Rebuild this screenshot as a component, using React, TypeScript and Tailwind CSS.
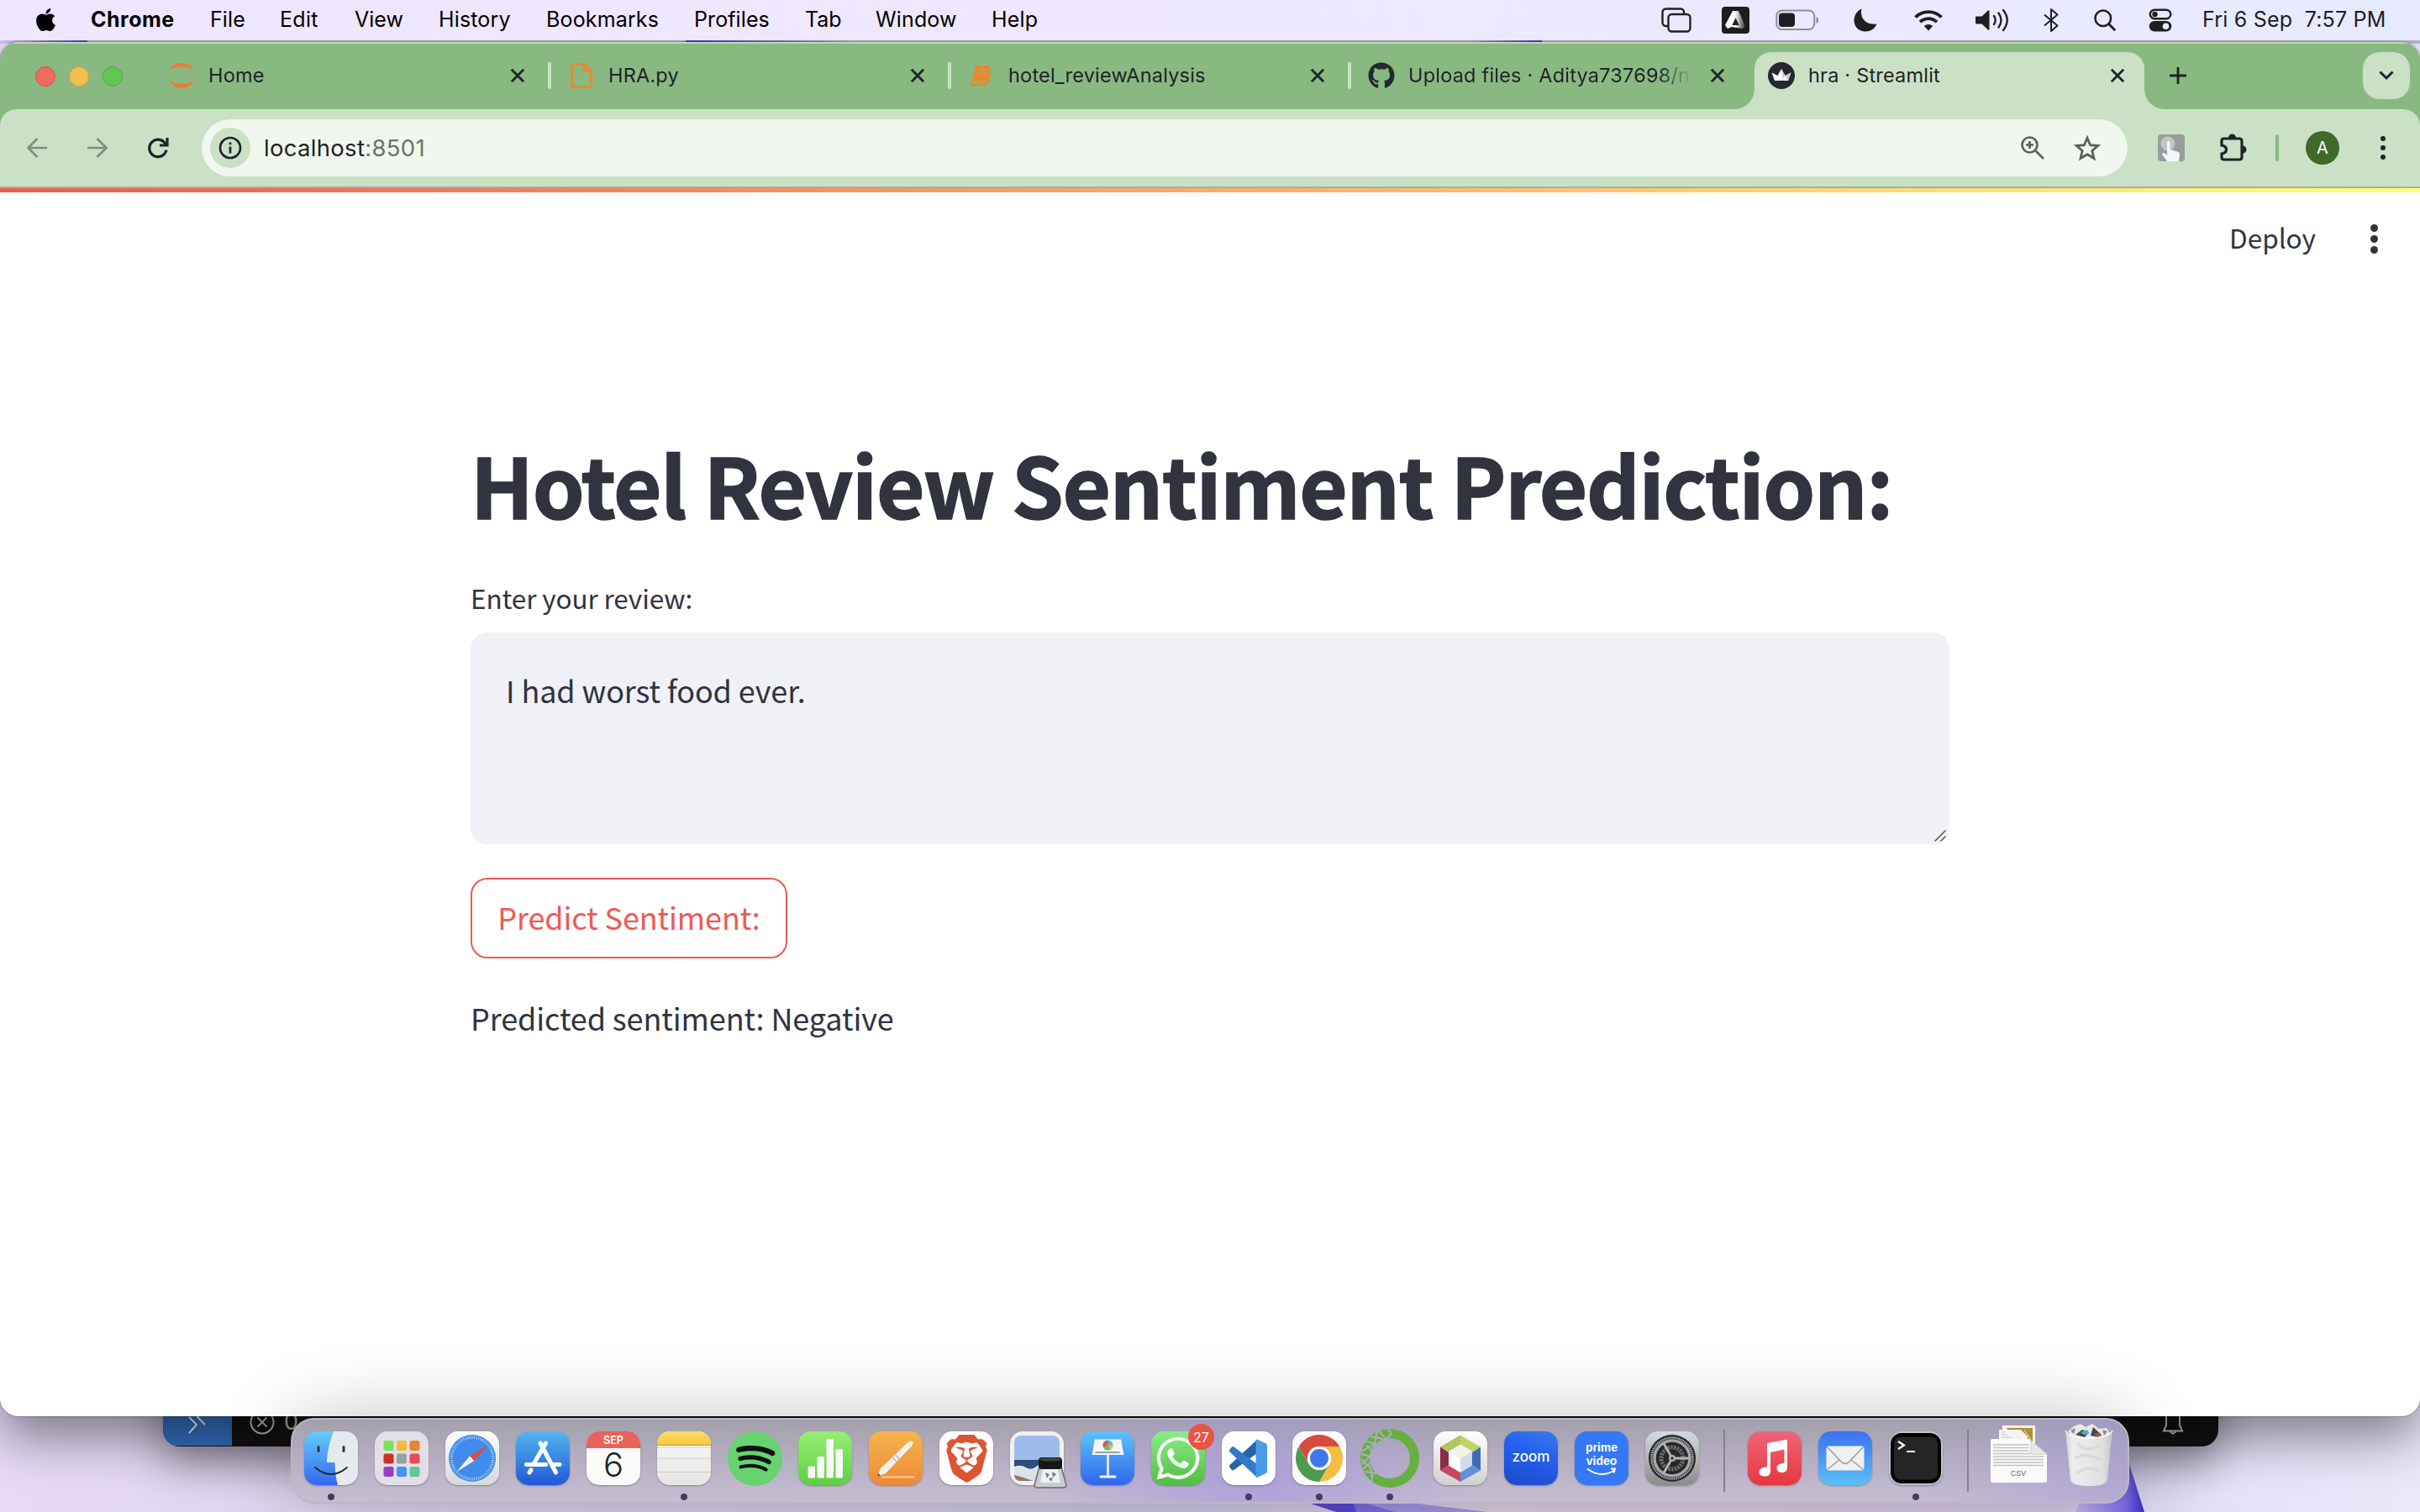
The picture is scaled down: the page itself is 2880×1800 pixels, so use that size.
import React from "react";
import { FaApple, FaGithub, FaSpotify, FaWhatsapp } from "react-icons/fa";
import { SiBrave } from "react-icons/si";

const sans = "font-['Inter','Liberation_Sans',sans-serif]";
const source = "font-['Noto_Sans_CJK_SC','Noto_Sans',sans-serif]";

/* ---------- Menu bar ---------- */

const menus = [
  { label: "Chrome", cls: "w-[142px] font-bold tracking-[0.5px]" },
  { label: "File", cls: "w-[83px] tracking-[0.1px]" },
  { label: "Edit", cls: "w-[89px] tracking-[0.3px]" },
  { label: "View", cls: "w-[100px]" },
  { label: "History", cls: "w-[128px] tracking-[0.15px]" },
  { label: "Bookmarks", cls: "w-[176px] tracking-[0.15px]" },
  { label: "Profiles", cls: "w-[132px] tracking-[0.1px]" },
  { label: "Tab", cls: "w-[84px]" },
  { label: "Window", cls: "w-[138px] tracking-[0.15px]" },
  { label: "Help", cls: "w-[80px] tracking-[0.2px]" },
];

function Cell({ cls, children }: { cls: string; children: React.ReactNode }) {
  return <div className={`flex shrink-0 items-center justify-center ${cls}`}>{children}</div>;
}

function StatusIcons() {
  return (
    <>
      <Cell cls="w-[68px]">
        <svg width="36" height="30" viewBox="0 0 36 30" fill="none" stroke="#222" strokeWidth="2.4">
          <path d="M8 22H5.5a4 4 0 0 1-4-4V5.500a4 4 0 0 1 4-4H23a4 4 0 0 1 4 4V7" />
          <rect x="8.500" y="8" width="26" height="20.500" rx="4" />
        </svg>
      </Cell>
      <Cell cls="w-[72px]">
        <svg width="33" height="32" viewBox="0 0 33 32">
          <defs>
            <linearGradient id="ag" x1="0" x2="1">
              <stop offset=".5" stopColor="#fff" />
              <stop offset="1" stopColor="#333" />
            </linearGradient>
          </defs>
          <rect width="33" height="32" rx="4" fill="#1d1d1f" />
          <path d="M13 5h7l8 18-3 3-13-2-5 2-3-4z" fill="url(#ag)" />
          <path d="M16.500 13l4 9h-8z" fill="#1d1d1f" />
        </svg>
      </Cell>
      <Cell cls="w-[75px]">
        <svg width="52" height="26" viewBox="0 0 52 26">
          <rect x="1.200" y="1.500" width="45" height="22.500" rx="6.500" fill="none" stroke="#8f8d99" strokeWidth="2" />
          <rect x="4" y="4.500" width="19" height="16.500" rx="4" fill="#1f1f21" />
          <path d="M48.500 9v8c1.800-.6 2.600-2 2.600-4s-.8-3.400-2.600-4z" fill="#8f8d99" />
        </svg>
      </Cell>
      <Cell cls="w-[87px]">
        <svg width="28" height="28" viewBox="0 0 28 28">
          <path d="M9.500 0.500C7.500 9 12 20 27.500 18.500C25 24.500 20 27.500 14 27.500C6 27.500 0.500 21.500 0.500 14.500C0.500 8 4 3 9.500 0.500Z" fill="#1f1f21" />
        </svg>
      </Cell>
      <Cell cls="w-[64px]">
        <svg width="34" height="26" viewBox="0 0 34 26" fill="none" stroke="#1f1f21" strokeWidth="3.800">
          <path d="M1.500 9.500a22 22 0 0 1 31 0" />
          <path d="M7 15.200a14.200 14.200 0 0 1 20 0" />
          <path d="M17 25.500l-5.200-5.400a7.400 7.400 0 0 1 10.400 0z" fill="#1f1f21" stroke="none" />
        </svg>
      </Cell>
      <Cell cls="w-[88px]">
        <svg width="40" height="28" viewBox="0 0 40 28" fill="none" stroke="#1f1f21" strokeWidth="2.300" strokeLinecap="round">
          <path d="M1 9.500h6.500L15 2.500q1.500-1 1.500 1v21q0 2-1.500 1L7.500 18.500H1q-1 0-1-1v-7q0-1 1-1z" fill="#1f1f21" stroke="none" />
          <path d="M22 9q3.500 5 0 10M27.500 5.500q6 8.500 0 17M33 2q9.500 12 0 24" />
        </svg>
      </Cell>
      <Cell cls="w-[52px]">
        <svg width="20" height="28" viewBox="0 0 20 28" fill="none" stroke="#1f1f21" strokeWidth="2" strokeLinejoin="round">
          <path d="M2 7.500l15.500 13L10 27V1l7.500 6.500L2 20.500" />
        </svg>
      </Cell>
      <Cell cls="w-[76px]">
        <svg width="26" height="26" viewBox="0 0 26 26" fill="none" stroke="#1f1f21" strokeWidth="2.500" strokeLinecap="round">
          <circle cx="10.800" cy="10.800" r="9.300" />
          <path d="M17.800 17.800l6.500 6.500" strokeWidth="3" />
        </svg>
      </Cell>
      <Cell cls="w-[56px]">
        <svg width="28" height="28" viewBox="0 0 28 28">
          <rect x="1.800" y="1.800" width="24.400" height="10.400" rx="5.200" fill="none" stroke="#1f1f21" strokeWidth="2.400" />
          <circle cx="7.500" cy="7" r="3.200" fill="#1f1f21" />
          <rect x="0.800" y="15" width="26.400" height="12.500" rx="6.200" fill="#1f1f21" />
          <circle cx="20.500" cy="21.200" r="3.800" fill="#ebe9fd" />
        </svg>
      </Cell>
    </>
  );
}

function MenuBar() {
  return (
    <div className={`absolute inset-x-0 top-0 flex h-12 items-center bg-[linear-gradient(90deg,#efe6ff_0%,#eee8fe_50%,#e7eaff_100%)] text-[25px] text-black ${sans}`}>
      <div className="flex w-[108px] justify-center">
        <FaApple className="size-[31px] -translate-y-px" />
      </div>
      {menus.map((m) => (
        <span key={m.label} className={`shrink-0 -translate-y-px leading-[48px] whitespace-nowrap ${m.cls}`}>
          {m.label}
        </span>
      ))}
      <div className="ml-auto flex items-center">
        <StatusIcons />
        <span className="ml-[22px] w-[259px] -translate-y-px leading-[48px] tracking-[0.2px] whitespace-pre text-[#1d1d1f]">
          Fri 6 Sep&nbsp; 7:57 PM
        </span>
      </div>
    </div>
  );
}

/* ---------- Browser tabs ---------- */

function Close() {
  return (
    <svg width="18" height="18" viewBox="0 0 18 18" stroke="#1f2328" strokeWidth="2.800">
      <path d="M1.800 1.800l14.400 14.400M16.200 1.800L1.800 16.200" />
    </svg>
  );
}

const jupyter = (
  <svg width="32" height="32" viewBox="0 0 32 32" fill="#ee7c34">
    <path d="M1 10C4 4 9 1 16 1s12 3 15 9C27 7 22 5.500 16 5.500S5 7 1 10z" />
    <path d="M1 21c3 6.500 8 10 15 10s12-3.500 15-10c-4 3.500-9 5-15 5S5 24.500 1 21z" />
  </svg>
);
const fileIcon = (
  <svg width="26" height="30" viewBox="0 0 26 30" fill="none" stroke="#f28427" strokeWidth="2.600">
    <path d="M1.500 1.500h15l8 8v19h-23z" />
    <path d="M16.500 1.500v8h8" />
  </svg>
);
const bookIcon = (
  <svg width="28" height="26" viewBox="0 0 28 26">
    <path d="M9 1H21.500Q24 1 23.500 3L19 17.500Q18.300 19.500 16 19.500H3L7 3Q7.500 1 9 1Z" fill="#f28427" />
    <path d="M3 19.500Q0.500 24 3.500 24.500H18Q20.300 24.500 21 22L26 7" fill="none" stroke="#f28427" strokeWidth="2" />
    <path d="M4 22H17.500Q19 22 19.500 20L24.500 5" fill="none" stroke="#f28427" strokeWidth="1.200" />
    <path d="M10.500 6h9.500M9.300 10.300h9.500" stroke="#88b981" strokeWidth="1.800" />
  </svg>
);
const streamlitIcon = (
  <svg width="32" height="32" viewBox="0 0 32 32">
    <circle cx="16" cy="16" r="16" fill="#262730" />
    <path d="M4.500 12.500l7 3.500L16 8l4.500 8 7-3.500L24 22H8z" fill="#fff" />
    <path d="M16 8l4.500 8L24 22H18zM27.500 12.500L20.500 16l-5 6H24z" fill="#c9c9c9" />
  </svg>
);

const tabs = [
  { title: "Home", icon: jupyter, cls: "" },
  { title: "HRA.py", icon: fileIcon, cls: "" },
  { title: "hotel_reviewAnalysis", icon: bookIcon, cls: "" },
  {
    title: "Upload files · Aditya737698/n",
    icon: <FaGithub className="size-8 text-[#24292f]" />,
    cls: "bg-[linear-gradient(90deg,#1f2328_88%,#88b981_100%)] bg-clip-text text-transparent",
  },
];

function TabStrip() {
  return (
    <div className={`flex h-20 bg-[linear-gradient(#bfd8bb_0,#bfd8bb_2px,#88b981_2px)] text-[23.5px] text-[#1f2328] ${sans}`}>
      <div className="flex w-[178px] items-center gap-4 pl-[42px] pt-0.5">
        <div className="size-6 rounded-full border border-[#d5544b] bg-[#ee6b60]" />
        <div className="size-6 rounded-full border border-[#d8a03b] bg-[#f5bf50]" />
        <div className="size-6 rounded-full border border-[#4fa840] bg-[#62c655]" />
      </div>
      {tabs.map((t, i) => (
        <div key={t.title} className="flex w-[476px] shrink-0 items-center pl-[22px] pr-[29px]">
          <div className="flex w-8 justify-center">{t.icon}</div>
          <span className={`ml-4 w-[338px] overflow-hidden leading-10 tracking-[0.2px] whitespace-nowrap ${t.cls}`}>{t.title}</span>
          <div className="ml-auto">
            <Close />
          </div>
          <div className={`-mr-[31px] ml-[27px] h-8 w-1 rounded-full ${i < 3 ? "bg-[#cae1c6]" : "bg-transparent"}`} />
        </div>
      ))}
      <div className="relative ml-1.5 mt-3 flex h-[68px] w-[464px] shrink-0 items-center rounded-t-[20px] bg-[#cae1c6] pl-4 pr-[23px]">
        <svg className="absolute bottom-0 -left-6" width="24" height="24" viewBox="0 0 24 24">
          <path d="M24 0v24H0A24 24 0 0 0 24 0z" fill="#cae1c6" />
        </svg>
        <svg className="absolute -right-6 bottom-0" width="24" height="24" viewBox="0 0 24 24">
          <path d="M0 0v24h24A24 24 0 0 1 0 0z" fill="#cae1c6" />
        </svg>
        <div className="flex w-full -translate-y-1.5 items-center">
          {streamlitIcon}
          <span className="ml-4 leading-10 tracking-[0.2px]">hra · Streamlit</span>
          <div className="ml-auto">
            <Close />
          </div>
        </div>
      </div>
      <div className="flex w-20 items-center justify-center">
        <svg width="22" height="22" viewBox="0 0 22 22" stroke="#1f2328" strokeWidth="2.800">
          <path d="M11 1v20M1 11h20" />
        </svg>
      </div>
      <div className="mt-3 mr-3 ml-auto flex h-14 w-14 items-center justify-center rounded-[20px] bg-[#cae1c6]">
        <svg width="18" height="12" viewBox="0 0 18 12" fill="none" stroke="#1f2328" strokeWidth="3">
          <path d="M1.500 1.500L9 9l7.500-7.500" />
        </svg>
      </div>
    </div>
  );
}

function Toolbar() {
  return (
    <div className="bg-[#88b981]">
      <div className="flex h-[92px] items-center rounded-t-[20px] bg-[#cae1c6] pl-2">
        <Cell cls="w-[72px]">
          <svg width="26" height="26" viewBox="0 0 26 26" fill="none" stroke="#7f8e7d" strokeWidth="2.700">
            <path d="M25 13H3M13.500 2L2.500 13l11 11" />
          </svg>
        </Cell>
        <Cell cls="w-[72px]">
          <svg width="26" height="26" viewBox="0 0 26 26" fill="none" stroke="#7f8e7d" strokeWidth="2.700">
            <path d="M1 13h22M12.500 2l11 11-11 11" />
          </svg>
        </Cell>
        <Cell cls="w-[72px]">
          <svg width="26" height="26" viewBox="0 0 26 26" fill="none" stroke="#1f2328" strokeWidth="3.200">
            <path d="M22.300 9.200A10.200 10.200 0 1 0 23 15.500" />
            <path d="M24 1v9h-9" />
          </svg>
        </Cell>
        <div className="ml-4 flex h-[68px] w-[2292px] items-center rounded-full bg-[#f0f7ef] pl-2.5 pr-8">
          <div className="flex size-12 items-center justify-center rounded-full bg-[#cae1c6]">
            <svg width="28" height="28" viewBox="0 0 28 28" fill="none" stroke="#1f2328" strokeWidth="2.700">
              <circle cx="14" cy="14" r="12" />
              <path d="M14 12.500v8M14 7.500v2.800" />
            </svg>
          </div>
          <span className={`ml-4 text-[27.5px] leading-[68px] tracking-[0.3px] text-[#1f2328] ${sans}`}>
            localhost<span className="text-[#6a736a]">:8501</span>
          </span>
          <svg className="ml-auto" width="30" height="30" viewBox="0 0 30 30" fill="none" stroke="#5a615a" strokeWidth="2.700">
            <circle cx="11.500" cy="11.500" r="9" />
            <path d="M18 18l10 10M11.500 7v9M7 11.500h9" />
          </svg>
          <svg className="ml-[34px]" width="32" height="32" viewBox="0 0 32 32" fill="none" stroke="#5a615a" strokeWidth="2.800">
            <path d="M16 4.200l3.600 8.500 9.200.8-7 6 2.200 9-8-4.800-8 4.800 2.200-9-7-6 9.200-.8z" />
          </svg>
        </div>
        <Cell cls="ml-4 w-[72px]">
          <svg width="32" height="32" viewBox="0 0 32 32">
            <rect width="32" height="32" rx="4" fill="#9a9c9a" />
            <circle cx="12" cy="11" r="8.500" fill="#c4c6c4" />
            <path d="M12 8q2-1 2.500 1v9l9 2.500q3 1 2.500 4L25 32H11l-6-8q0-2.500 3-1.500l3 2V9z" fill="#f1f6fd" />
          </svg>
        </Cell>
        <Cell cls="w-[72px] pl-1">
          <svg width="34" height="34" viewBox="0 0 34 34">
            <path d="M5.500 6q-2.500 0-2.500 2.500v5.500q5.500.8 5.500 5t-5.500 5v4.500q0 2.500 2.500 2.500h18.500q3 0 3-3V9q0-3-3-3z" fill="none" stroke="#1f2328" strokeWidth="3.200" />
            <path d="M11 5a4.500 4.500 0 0 1 9 0zM28 14.500a4.500 4.500 0 0 1 0 9z" fill="#1f2328" />
          </svg>
        </Cell>
        <Cell cls="w-9">
          <div className="h-8 w-1 rounded-full bg-[#88b981]" />
        </Cell>
        <Cell cls="w-[72px]">
          <div className={`flex size-10 items-center justify-center rounded-full bg-[#40692a] text-[20px] text-white ${sans}`}>A</div>
        </Cell>
        <Cell cls="w-[72px]">
          <div className="flex flex-col gap-[5px]">
            <div className="size-1.5 rounded-full bg-[#1f2328]" />
            <div className="size-1.5 rounded-full bg-[#1f2328]" />
            <div className="size-1.5 rounded-full bg-[#1f2328]" />
          </div>
        </Cell>
      </div>
    </div>
  );
}

/* ---------- Streamlit page ---------- */

function StreamlitPage() {
  return (
    <div className={`flex flex-1 flex-col bg-white text-[#31333f] ${source}`}>
      <div className="h-0.5 bg-[#9fb39c]" />
      <div className="h-[5px] bg-[linear-gradient(90deg,#f05b54,#fffd80)]" />
      <header className="flex items-center justify-end pt-[27px] pr-[50px]">
        <span className="-translate-y-0.5 text-[31.5px] leading-[56px]">Deploy</span>
        <div className="ml-[65px] flex flex-col gap-1">
          <div className="size-[9px] rounded-full bg-[#31333f]" />
          <div className="size-[9px] rounded-full bg-[#31333f]" />
          <div className="size-[9px] rounded-full bg-[#31333f]" />
        </div>
      </header>
      <main className="mx-auto flex w-[1760px] flex-col items-start pt-[197px]">
        <h1 className="text-[99px] leading-[132px] font-bold tracking-[-1.28px] whitespace-nowrap [-webkit-text-stroke:1.6px_#31333f]">
          Hotel Review Sentiment Prediction:
        </h1>
        <label className="mt-[42px] text-[31.5px] leading-[56px] tracking-[-0.1px]">Enter your review:</label>
        <div className="relative mt-3.5 h-[252px] w-full rounded-[20px] bg-[#f0f1f6] px-[42px] pt-10 text-[36px] leading-[56px] tracking-[-0.1px]">
          I had worst food ever.
          <svg className="absolute right-1 bottom-[3px]" width="14" height="14" viewBox="0 0 14 14" stroke="#4a4a4a" strokeWidth="1.400">
            <path d="M.5 13.500l13-13M7.500 13.500l6-6" />
          </svg>
        </div>
        <button className="mt-10 flex h-24 w-[377px] items-center justify-center rounded-[20px] border-[2px] border-[#ee5a54] pb-[5px] text-[36px] leading-[56px] tracking-[-0.1px] text-[#ee5a54]">
          Predict Sentiment:
        </button>
        <p className="mt-[38px] text-[36px] leading-[64px] tracking-[-0.1px]">Predicted sentiment: Negative</p>
      </main>
    </div>
  );
}

/* ---------- Dock ---------- */

const ticks = Array.from({ length: 60 }, (_, i) => i * 6);
const padColors = ["#7ae25a", "#f7b93a", "#e8862f", "#cf3026", "#9a9fa2", "#ea4a5c", "#9440c4", "#3f94f5", "#5fc79a"];

function Tile({ cls, children }: { cls: string; children?: React.ReactNode }) {
  return <div className={`relative flex size-16 items-center justify-center overflow-hidden rounded-[15px] shadow-[0_1px_2px_rgba(0,0,0,0.3)] ${cls}`}>{children}</div>;
}

function Art({ children }: { children: React.ReactNode }) {
  return (
    <svg className="shrink-0 overflow-visible" width="64" height="64" viewBox="0 0 64 64" fill="none">
      {children}
    </svg>
  );
}

const finder = (
  <Tile cls="bg-[linear-gradient(#63cdf9,#3567f0)]">
    <Art>
      <path d="M35 0C30 12 27 28 27 37h9.500c0 11 1.500 20 3.500 27h24V0z" fill="#e6e9ee" />
      <path d="M17 18.500v5M47 18.500v5" stroke="#333" strokeWidth="3" strokeLinecap="round" />
      <path d="M13 43q19 16 38 0" stroke="#222" strokeWidth="1.800" strokeLinecap="round" />
    </Art>
  </Tile>
);
const launchpad = (
  <Tile cls="bg-[#e2dfe8]">
    <Art>
      {padColors.map((c, i) => (
        <rect key={c} x={10.500 + (i % 3) * 15.500} y={11 + Math.floor(i / 3) * 15.500} width="12" height="12" rx="2.500" fill={c} />
      ))}
    </Art>
  </Tile>
);
const safari = (
  <Tile cls="bg-[linear-gradient(#fff,#d8d8d8)]">
    <Art>
      <circle cx="32" cy="32" r="28" fill="#3f8cec" />
      {ticks.map((a) => (
        <path key={a} d="M32 5.500v3.500" stroke="#cfe2fb" strokeWidth=".8" transform={`rotate(${a} 32 32)`} />
      ))}
      <path d="M51 16L29 29.500l5.500 5.500z" fill="#e2483c" />
      <path d="M13 48.500L29 29.500l5.500 5.500z" fill="#f4f4f4" />
    </Art>
  </Tile>
);
const appStore = (
  <Tile cls="bg-[linear-gradient(#52b5f0,#2358d6)]">
    <Art>
      <g stroke="#fff" strokeWidth="5" strokeLinecap="round">
        <path d="M29 14l18.500 35M35.500 14L21.500 38M12.500 39.500h23M44 39.500h8M18 46l-2 3" />
      </g>
    </Art>
  </Tile>
);
const calendar = (
  <Tile cls="flex-col justify-start bg-[#fafaf8]">
    <div className={`h-5 w-full bg-[#e6645a] text-center text-[12.5px] leading-[21px] font-semibold text-white ${sans}`}>SEP</div>
    <div className={`text-[40px] leading-[40px] font-light text-[#222] ${sans}`}>6</div>
  </Tile>
);
const notes = (
  <Tile cls="flex-col justify-start bg-[linear-gradient(#fafafa,#e6e5e1)]">
    <div className="h-4 w-full bg-[linear-gradient(#fbdb6a,#f7c83c)]" />
    <div className="h-px w-full bg-[#a99a6b]" />
    <div className="mt-0.5 w-full border-t border-dotted border-[#b5b5b0]" />
    <div className="mt-3 h-px w-full bg-[#d6d6d4]" />
    <div className="mt-[15px] h-px w-full bg-[#c9c9c5]" />
  </Tile>
);
const spotify = (
  <div className="relative flex size-[67px] items-center justify-center">
    <div className="absolute inset-2 rounded-full bg-[#111]" />
    <FaSpotify className="relative size-[67px] text-[#66d36e]" />
  </div>
);
const numbers = (
  <Tile cls="bg-[linear-gradient(#97ee74,#5fcf44)]">
    <Art>
      <g fill="#f7f8f7">
        <rect x="11.500" y="41.500" width="8.500" height="14" rx="1.500" />
        <rect x="22.500" y="30" width="8.500" height="25.500" rx="1.500" />
        <rect x="33.500" y="9" width="8.500" height="46.500" rx="1.500" />
        <rect x="44.500" y="21" width="8.500" height="34.500" rx="1.500" />
      </g>
    </Art>
  </Tile>
);
const pages = (
  <Tile cls="bg-[linear-gradient(#f5b44c,#ee8a36)]">
    <Art>
      <path d="M16 54.500h38" stroke="#f8cf9d" strokeWidth="2.200" strokeLinecap="round" />
      <path d="M10 54l4-10L46 13.500q4-3 6-1.500 1.500 2-1.500 6L20 50z" fill="#f3f1ef" />
      <path d="M28 31l6 6M31.500 28l5.500 6" stroke="#bdb4aa" strokeWidth="1.200" />
      <path d="M10 54l1.500-4 2.500 2.500z" fill="#555" />
    </Art>
  </Tile>
);
const brave = (
  <Tile cls="bg-white">
    <SiBrave className="size-[57px] text-[#dd5434]" />
  </Tile>
);
const preview = (
  <div className="relative">
    <Tile cls="bg-[#f0f0f0]">
      <Art>
        <rect x="5" y="5" width="54" height="54" rx="8" fill="#9dbcec" />
        <path d="M5 34h54v17q0 8-8 8H13q-8 0-8-8z" fill="#2f4d80" />
        <path d="M5 42q8-3 14 1t12-1 12 3v14H13q-8 0-8-8z" fill="#dbe3ea" />
        <path d="M5 52q10 2 22 7H13q-7 0-8-7z" fill="#8f7a66" />
      </Art>
    </Tile>
    <svg className="absolute -right-1 -bottom-1" width="40" height="38" viewBox="0 0 40 38">
      <path d="M7 12h26l6 22q0 3-4 3H5q-4 0-4-3z" fill="#c9ccd0" stroke="#66696d" strokeWidth="1.500" />
      <path d="M11 15h18l3 16H8z" fill="#eef0f4" />
      <path d="M14 19l5 2-3 5zM22 18l5 3-4 4zM18 26l5-1-2 5z" fill="#6f7d96" />
      <rect x="6" y="1" width="28" height="14" rx="4" fill="#161616" />
      <ellipse cx="20" cy="3.500" rx="13" ry="2" fill="#444" />
    </svg>
  </div>
);
const keynote = (
  <Tile cls="bg-[linear-gradient(#5cc3f9,#2f66ea)]">
    <Art>
      <path d="M17 9.500h31l3.500 18.500h-38z" fill="#f5f6f8" />
      <path d="M17.500 25h29" stroke="#8fa3bb" strokeWidth="1.800" />
      <circle cx="32.500" cy="16.500" r="6" fill="#58b6e8" />
      <path d="M32.500 16.500v-6a6 6 0 0 0-5.600 8z" fill="#e5534a" />
      <path d="M32.500 16.500l-5.600 2a6 6 0 0 0 8.600 3.200z" fill="#6abf59" />
      <path d="M32.500 16.500l3 5.200a6 6 0 0 0 3-5.200z" fill="#f3b944" />
      <path d="M32.500 28v25" stroke="#dfe6f2" strokeWidth="3" />
      <rect x="22.500" y="52.500" width="20" height="3" rx="1.500" fill="#eef2f9" />
    </Art>
  </Tile>
);
const whatsapp = (
  <div className="relative">
    <Tile cls="bg-[linear-gradient(#86ee84,#53bd43)]">
      <FaWhatsapp className="size-[58px] text-[#f6f8f6]" />
    </Tile>
    <div className={`absolute -top-[9px] -right-[11px] flex size-[31px] items-center justify-center rounded-full bg-[#e95445] text-[16px] text-white ${sans}`}>27</div>
  </div>
);
const vscode = (
  <Tile cls="bg-white">
    <Art>
      <path d="M9.500 40L42 10v16L14.500 46q-1.500 1-3-.5L9.500 43q-1-1.500 0-3z" fill="#2763a8" />
      <path d="M9.500 24.500q-1-1.500 0-3l2-2.500q1.500-1.500 3-.5L42 39v16z" fill="#3279c6" />
      <path d="M42 9.500L52.500 14.500q1.500.8 1.500 2.500v30.500q0 1.700-1.500 2.500L42 55q-1 .3-1.500-1V10.500q.5-1.300 1.500-1z" fill="#4a9ae8" />
    </Art>
  </Tile>
);
const chrome = (
  <Tile cls="bg-[#fbfbfc]">
    <svg width="56" height="56" viewBox="0 0 48 48">
      <path d="M24 12H44.780A23.994 23.994 0 0 0 3.215 12.003L13.608 30.003A11.985 11.985 0 0 1 24 12z" fill="#d94a3c" />
      <path d="M34.391 30.003L24 48A23.994 23.994 0 0 0 44.780 12H24A11.985 11.985 0 0 1 34.391 30.003z" fill="#f4be42" />
      <path d="M13.609 30.003L3.218 12.006A23.994 23.994 0 0 0 24 48L34.394 30.003A11.985 11.985 0 0 1 13.609 30.003z" fill="#4c9c50" />
      <circle cx="24" cy="24" r="12" fill="#fff" />
      <circle cx="24" cy="24" r="9.400" fill="#3f78e6" />
    </svg>
  </Tile>
);
const anaconda = (
  <svg className="shrink-0" width="70" height="70" viewBox="0 0 70 70" fill="none">
    <circle cx="35" cy="35" r="29.500" stroke="#66b03f" strokeWidth="11" />
    <g stroke="#b3aacb" strokeWidth="1.900">
      <path d="M33 0l4 6-8 7M22 2l8 10M12 9l15 3M20 3l-3 15M7 15l11 3M7 19l8 10M1 27l16-9M1 30l14 4M2 42l12-12M3 48l10-9M1 36l12 12M5 51l14 2M10 43l5 14M13 49l1 13" />
    </g>
  </svg>
);
const netbeans = (
  <Tile cls="bg-[linear-gradient(#fff,#d0d0d0)]">
    <Art>
      <path d="M32 4.500L8 18.500l12 7L32 18z" fill="#b0c45f" />
      <path d="M32 4.500l24 14-11 7L32 18z" fill="#bfd468" />
      <path d="M8 18.500v28l10-6V25z" fill="#8c2b45" />
      <path d="M56 18.500v28l-10-6V25z" fill="#4269b5" />
      <path d="M8 46.500L32 60V49l-14-8.500z" fill="#c74763" />
      <path d="M56 46.500L32 60V49l14-8.500z" fill="#5f90dc" />
      <path d="M32 15.500l14 8-14 8.500-14-8.500z" fill="#f1f4e3" />
      <path d="M18 24l14 8.500V49l-14-8.500z" fill="#fff" />
      <path d="M46 24l-14 8.500V49l14-8.500z" fill="#d3dbe7" />
    </Art>
  </Tile>
);
const zoomApp = (
  <Tile cls="bg-[linear-gradient(20deg,#1d49c8,#2560f0_60%,#3d7be8)]">
    <span className={`-translate-y-0.5 text-[17px] leading-none font-medium text-white ${sans}`}>zoom</span>
  </Tile>
);
const prime = (
  <Tile cls="flex-col bg-[#3478f6]">
    <span className="font-['Liberation_Sans',sans-serif] text-[14px] leading-[16px] font-bold text-white">prime</span>
    <span className="font-['Liberation_Sans',sans-serif] text-[14px] leading-[16px] font-bold text-white">video</span>
    <svg width="36" height="10" viewBox="0 0 36 10" fill="none" stroke="#fff" strokeWidth="1.900">
      <path d="M1 1.500q16 12 32 2M29 1.500h5l-1.500 5" />
    </svg>
  </Tile>
);
const settings = (
  <Tile cls="bg-[linear-gradient(#d3dade,#8d8c8a)]">
    <Art>
      <circle cx="32" cy="32" r="28" fill="#26282a" />
      <circle cx="32" cy="32" r="24.500" stroke="#b9bbbb" strokeWidth="2.500" strokeDasharray="1.500 1" />
      <circle cx="32" cy="32" r="21" stroke="#a5a7a8" strokeWidth="3.500" />
      <circle cx="32" cy="32" r="13" stroke="#6a6c6d" strokeWidth="5" strokeDasharray="2.500 1.200" />
      <path d="M32 32h20M32 32L22 14.500M32 32L22 49.500" stroke="#b4b6b6" strokeWidth="2.800" />
      <circle cx="32" cy="32" r="4" fill="#b4b6b6" />
      <circle cx="32" cy="32" r="1.800" fill="#333" />
    </Art>
  </Tile>
);
const music = (
  <Tile cls="bg-[linear-gradient(#ef6678,#e5373f)]">
    <Art>
      <path d="M23 15.500q0-1.500 1.500-1.800L45 10q2-.3 2 1.600v31.400q0 6-7 6-5.500-.5-5.500-5t5-5.500l4-.8V21.500L27 25v22.500q0 6.500-7.500 6-6-.5-6-5t5.500-5.500l4-.8z" fill="#fff" />
    </Art>
  </Tile>
);
const mail = (
  <Tile cls="bg-[linear-gradient(#3a72f0,#5cbff8)]">
    <Art>
      <rect x="9.500" y="17.500" width="45" height="29" rx="3" fill="#f1f0f0" />
      <path d="M10.500 18.500L27 36q5 5 10 0L53.500 18.500M10.500 45.500L25 34M53.500 45.500L39 34" stroke="#9b9b9b" strokeWidth="1.400" />
    </Art>
  </Tile>
);
const terminal = (
  <Tile cls="border-[2.5px] border-[#b8c6cb] bg-black">
    <Art>
      <rect x="6" y="6.500" width="52" height="51" rx="8" fill="#252525" />
      <path d="M11 12l7 4.500-7 4.500" stroke="#fff" strokeWidth="2.200" />
      <path d="M21 24h10" stroke="#fff" strokeWidth="2.200" />
    </Art>
  </Tile>
);
const csv = (
  <div className="relative h-[70px] w-[68px]">
    <svg width="68" height="70" viewBox="0 0 68 70">
      <rect x="15" y="1" width="39" height="30" fill="#f4f2ea" />
      <path d="M20 4h31v18H30z" fill="#b0902f" />
      <path d="M11 6h26l8 8v14H11z" fill="#f3f3f3" />
      <path d="M14 9h4M14 12h6M14 15h12M14 20h6" stroke="#bbb" strokeWidth=".8" />
      <path d="M1 19q0-2 2-2h44l21 18v32q0 2-2 2H3q-2 0-2-2z" fill="#fafafa" />
      <g stroke="#c3c3c3" strokeWidth="1.500">
        <path d="M4 24h43M4 27.500h43M4 31h43M4 34.500h45M4 38h60M4 41.500h60M4 45h60M4 48.500h60" />
      </g>
      <path d="M41 6l8 14 19 15-16 .5q-3 0-3-3V18z" fill="#e9e9ea" stroke="#c9c9c9" strokeWidth=".8" />
    </svg>
    <span className="absolute inset-x-0 bottom-[7px] text-center font-['Liberation_Sans',sans-serif] text-[9px] leading-none text-[#666]">CSV</span>
  </div>
);
const trash = (
  <svg className="shrink-0" width="60" height="76" viewBox="0 0 60 76">
    <defs>
      <linearGradient id="bin" x1="0" x2="1">
        <stop offset="0" stopColor="#cfcfd1" />
        <stop offset=".15" stopColor="#ededed" />
        <stop offset=".8" stopColor="#e0e0e0" />
        <stop offset="1" stopColor="#c2c2c6" />
      </linearGradient>
    </defs>
    <path d="M5 10l7-6 8-3 6 4 8-4 8 6 9-1 4 6-6 8H12z" fill="#e8e8e8" />
    <path d="M2 9q4 9 28 9t28-9l-6 58q-1 8-22 8T8 67z" fill="url(#bin)" />
    <path d="M14 14l8-6 8 3-5 6zM32 15l3-10 10 9-4 3z" fill="#474a4e" />
    <path d="M20 11l8-3 2 5-6 1z" fill="#45b2d2" />
    <path d="M36 14l6-3 3 4-5 2z" fill="#a5543d" />
    <path d="M8 9l6-3-2 7zM46 8l6 2-4 5z" fill="#8a8b8d" />
    <path d="M2 9q4 9 28 9t28-9" fill="none" stroke="#fff" strokeWidth="1.400" />
    <path d="M16 24q10 12 26 3M14 42q12-8 30 2M16 60q12-10 26-3" fill="none" stroke="#d9d9d9" strokeWidth="3" />
  </svg>
);

const apps = [
  { id: "finder", el: finder, run: true },
  { id: "launchpad", el: launchpad },
  { id: "safari", el: safari },
  { id: "appstore", el: appStore },
  { id: "calendar", el: calendar },
  { id: "notes", el: notes, run: true },
  { id: "spotify", el: spotify },
  { id: "numbers", el: numbers },
  { id: "pages", el: pages },
  { id: "brave", el: brave },
  { id: "preview", el: preview },
  { id: "keynote", el: keynote },
  { id: "whatsapp", el: whatsapp },
  { id: "vscode", el: vscode, run: true },
  { id: "chrome", el: chrome, run: true },
  { id: "anaconda", el: anaconda, run: true },
  { id: "netbeans", el: netbeans },
  { id: "zoom", el: zoomApp },
  { id: "prime", el: prime },
  { id: "settings", el: settings },
  { id: "sep1" },
  { id: "music", el: music },
  { id: "mail", el: mail },
  { id: "terminal", el: terminal, run: true },
  { id: "sep2" },
  { id: "csv", el: csv },
  { id: "trash", el: trash },
] as { id: string; el?: React.ReactNode; run?: boolean }[];

function Dock() {
  return (
    <div className="absolute top-[1688px] left-[346px] flex h-[102px] w-[2188px] rounded-[28px] border-2 border-[#bdb6c8] bg-[radial-gradient(ellipse_260px_130px_at_1150px_70px,rgba(166,152,222,0.75),rgba(166,152,222,0)),linear-gradient(90deg,rgba(180,170,210,0)_88%,rgba(160,148,215,0.45)_100%),linear-gradient(#a3a0ab,#b6afc2_50%,#c6bdd2)] pl-1 shadow-[0_0_90px_rgba(0,0,0,0.24)]">
      {apps.map((a) =>
        a.el ? (
          <div key={a.id} className="flex w-[84px] shrink-0 flex-col items-center">
            <div className={`flex h-[92px] items-center ${a.id === "csv" ? "-translate-y-[5px]" : ""} ${a.id === "trash" ? "-translate-y-1" : ""}`}>{a.el}</div>
            {a.run && <div className="-mt-1 size-2 rounded-full bg-[#453b5c]" />}
          </div>
        ) : (
          <div key={a.id} className="flex w-[38px] shrink-0 justify-center pt-3 pl-0.5">
            <div className="h-[74px] w-0.5 bg-[#86818f]" />
          </div>
        ),
      )}
    </div>
  );
}

function EditorWindow() {
  return (
    <div className="absolute top-[1500px] left-[194px] flex h-[222px] w-[2446px] items-end overflow-hidden rounded-[20px] bg-[#121212] pb-px shadow-[0_20px_50px_rgba(0,0,0,0.4)]">
      <div className="flex h-14 w-[82px] items-center justify-center bg-[#346fbe]">
        <svg width="22" height="34" viewBox="0 0 22 34" fill="none" stroke="#f2f5f9" strokeWidth="2">
          <path d="M1 11l9 9-9 10M20 20l-9-9 9-9" />
        </svg>
      </div>
      <div className="flex h-14 items-center pl-[21px] text-[#c4c4c4]">
        <svg width="30" height="30" viewBox="0 0 30 30" fill="none" stroke="#c4c4c4" strokeWidth="2">
          <circle cx="15" cy="15" r="13.500" />
          <path d="M9.500 9.500l11 11M20.500 9.500l-11 11" />
        </svg>
        <span className={`ml-[11px] text-[27px] ${sans}`}>0</span>
      </div>
      <div className="mr-[41px] mb-[13px] ml-auto">
        <svg width="26" height="36" viewBox="0 0 26 36" fill="none" stroke="#c4c4c4" strokeWidth="2">
          <path d="M2 31.500l3-7V12a8 8 0 0 1 16 0v12.500l3 7zM10 32.500q3 4 6 0" />
        </svg>
      </div>
    </div>
  );
}

export default function App() {
  return (
    <div className="relative h-[1800px] w-[2880px] overflow-hidden bg-[linear-gradient(90deg,#e6daf7_0%,#d8cfe8_25%,#cbc5e2_50%,#dccfe2_62%,#d4c9e6_85%,#e4e2f8_92%,#e9e9fb_100%)]">
      <svg className="absolute top-[1640px] left-[1540px]" width="1060" height="160" viewBox="0 0 1060 160">
        <defs>
          <linearGradient id="petal" x1="0" x2="1">
            <stop offset="0" stopColor="#c9b9ec" />
            <stop offset=".75" stopColor="#7a68e6" />
            <stop offset="1" stopColor="#3a2bd0" />
          </linearGradient>
        </defs>
        <path d="M14 148l36 12h70l-40-12z" fill="#5a48d2" />
        <path d="M70 148h60l100 12H74z" fill="#8b7be6" opacity=".7" />
        <path d="M930 160L970 60l20 30 22 70z" fill="url(#petal)" />
      </svg>
      <EditorWindow />
      <div className="absolute inset-x-0 top-12 flex h-1">
        <div className="w-[104px] bg-[linear-gradient(90deg,#d9c6f0,#5549c8)]" />
        <div className="w-[712px] bg-[#b9b4c2]" />
        <div className="w-[200px] bg-[linear-gradient(90deg,#4a3fc0,#b9b4c2)]" />
        <div className="w-[734px] bg-[#b9b4c2]" />
        <div className="w-[85px] bg-[linear-gradient(90deg,#b9b4c2,#4a3fc8)]" />
        <div className="flex-1 bg-[#b9b8cc]" />
      </div>
      <div className="absolute top-[50px] left-0 flex h-[1636px] w-[2880px] flex-col overflow-hidden rounded-[22px] shadow-[0_0_2px_rgba(0,0,0,0.6),0_25px_60px_rgba(0,0,0,0.45)]">
        <TabStrip />
        <Toolbar />
        <StreamlitPage />
      </div>
      <MenuBar />
      <Dock />
    </div>
  );
}
